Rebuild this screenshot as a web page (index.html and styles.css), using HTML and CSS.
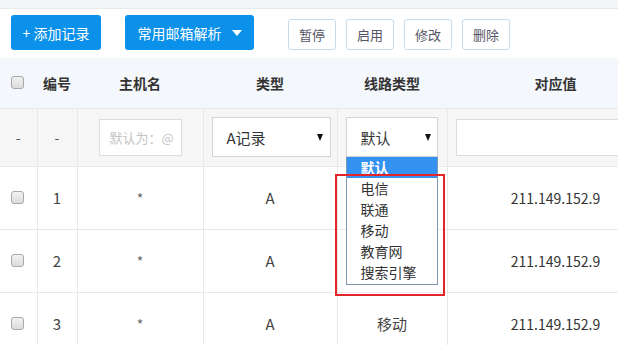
FILE: index.html
```html
<!DOCTYPE html>
<html lang="zh">
<head>
<meta charset="utf-8">
<title>解析记录</title>
<link rel="stylesheet" href="styles.css">
</head>
<body>
<div class="topstrip"></div>
<div class="toolbar">
  <button class="btn-primary btn-add">+ 添加记录</button>
  <button class="btn-primary btn-mail">常用邮箱解析 <span class="tri-white"></span></button>
  <div class="small-group">
    <button class="btn-small">暂停</button>
    <button class="btn-small">启用</button>
    <button class="btn-small">修改</button>
    <button class="btn-small">删除</button>
  </div>
</div>
<div class="table-wrap">
<table class="grid">
  <colgroup>
    <col class="c1"><col class="c2"><col class="c3"><col class="c4"><col class="c5"><col class="c6">
  </colgroup>
  <thead>
    <tr class="head">
      <th><span class="cb"></span></th>
      <th>编号</th>
      <th>主机名</th>
      <th>类型</th>
      <th>线路类型</th>
      <th>对应值</th>
    </tr>
  </thead>
  <tbody>
    <tr class="filter">
      <td>-</td>
      <td>-</td>
      <td><div class="inp inp-host">默认为：@</div></td>
      <td><div class="sel sel-type"><span>A记录</span><span class="tri"></span></div></td>
      <td class="line-cell">
        <div class="sel sel-line"><span>默认</span><span class="tri"></span></div>
        <div class="dropdown">
          <div class="opt opt-active">默认</div>
          <div class="opt">电信</div>
          <div class="opt">联通</div>
          <div class="opt">移动</div>
          <div class="opt">教育网</div>
          <div class="opt">搜索引擎</div>
        </div>
        <div class="redbox"></div>
      </td>
      <td><div class="inp inp-val"></div></td>
    </tr>
    <tr class="row">
      <td><span class="cb"></span></td>
      <td>1</td>
      <td class="star">*</td>
      <td>A</td>
      <td></td>
      <td class="val">211.149.152.9</td>
    </tr>
    <tr class="row">
      <td><span class="cb"></span></td>
      <td>2</td>
      <td class="star">*</td>
      <td>A</td>
      <td></td>
      <td class="val">211.149.152.9</td>
    </tr>
    <tr class="row">
      <td><span class="cb"></span></td>
      <td>3</td>
      <td class="star">*</td>
      <td>A</td>
      <td>移动</td>
      <td class="val">211.149.152.9</td>
    </tr>
  </tbody>
</table>
</div>
</body>
</html>
```

FILE: styles.css
```css
* { box-sizing: border-box; }
html, body { margin: 0; padding: 0; }
body {
  width: 618px;
  height: 345px;
  overflow: hidden;
  background: #fff;
  font-family: "Microsoft YaHei", "Noto Sans CJK SC", sans-serif;
  color: #333;
}
.topstrip {
  height: 9px;
  background: #f3f5f9;
  border-bottom: 1px solid #e6e9ee;
}
.toolbar {
  height: 49px;
  display: flex;
  align-items: flex-end;
  padding: 0 0 8px 11px;
}
button {
  font-family: inherit;
  cursor: pointer;
  margin: 0;
}
.btn-primary {
  height: 35px;
  background: #0b91ea;
  color: #fff;
  border: none;
  border-radius: 3px;
  font-size: 14px;
  padding: 0;
  display: flex;
  align-items: center;
  justify-content: center;
}
.btn-add { width: 90px; }
.btn-mail { width: 129px; margin-left: 24px; gap: 10px; }
.tri-white {
  width: 0; height: 0;
  border-left: 5px solid transparent;
  border-right: 5px solid transparent;
  border-top: 6px solid #fff;
}
.small-group {
  display: flex;
  gap: 10px;
  margin-left: 34px;
}
.btn-small {
  width: 48px;
  height: 31px;
  background: #fff;
  border: 1px solid #c5dbee;
  border-radius: 3px;
  color: #556;
  font-size: 13px;
  padding: 0;
}
.table-wrap {
  width: 618px;
  overflow: hidden;
}
.grid {
  border-collapse: collapse;
  table-layout: fixed;
  width: 664px;
}
.c1 { width: 37px; }
.c2 { width: 40px; }
.c3 { width: 126px; }
.c4 { width: 134px; }
.c5 { width: 110px; }
.c6 { width: 217px; }
.grid th, .grid td {
  padding: 0;
  text-align: center;
  vertical-align: middle;
  border: 1px solid #e8e8e8;
}
.grid tr > :first-child { border-left: none; }
.head { height: 50px; background: #f4f7fb; }
.head th {
  font-size: 14px;
  font-weight: bold;
  color: #333;
  border-top: none;
  border-left-color: transparent;
  border-right-color: transparent;
}
.filter { height: 58px; background: #f6f6f6; }
.filter td { font-size: 14px; color: #555; }
.row { height: 63px; }
.row td { font-size: 15px; color: #444; }
.row td.star { font-size: 14px; color: #666; }
.row td.val { font-size: 14px; color: #333; }
.cb {
  display: block;
  width: 13px;
  height: 13px;
  margin-left: 11px;
  border: 1px solid #a9a9a9;
  border-radius: 3px;
  background: linear-gradient(#f2f2f2, #dcdcdc);
}
.inp {
  height: 37px;
  background: #fff;
  border: 1px solid #dcdcdc;
  text-align: left;
  display: flex;
  align-items: center;
}
.inp-host {
  width: 83px;
  margin-left: 21px;
  padding-left: 10px;
  font-size: 13px;
  color: #c4c4c4;
}
.inp-val {
  margin-left: 8px;
  width: 220px;
}
.sel {
  height: 40px;
  background: #fff;
  border: 1px solid #d4d4d4;
  display: flex;
  align-items: center;
  justify-content: space-between;
  font-size: 15px;
  color: #333;
}
.sel-type { width: 119px; margin-left: 8px; padding: 0 7px 0 14px; }
.sel-line { width: 92px; margin-left: 8px; padding: 0 6px 0 14px; }
.tri {
  width: 0; height: 0;
  border-left: 3.5px solid transparent;
  border-right: 3.5px solid transparent;
  border-top: 7px solid #111;
}
.line-cell { position: relative; }
.dropdown {
  position: absolute;
  left: 8px;
  top: 48px;
  width: 92px;
  height: 128px;
  background: #fff;
  border: 1px solid #7d98b3;
  border-top: none;
  text-align: left;
  z-index: 2;
}
.opt {
  height: 21px;
  line-height: 21px;
  padding-left: 14px;
  font-size: 14px;
  color: #333;
}
.opt-active {
  background: #3392f0;
  color: #fff;
  font-weight: bold;
}
.redbox {
  position: absolute;
  left: -3px;
  top: 65px;
  width: 110px;
  height: 122px;
  border: 2px solid #e3242b;
  z-index: 3;
}
```
